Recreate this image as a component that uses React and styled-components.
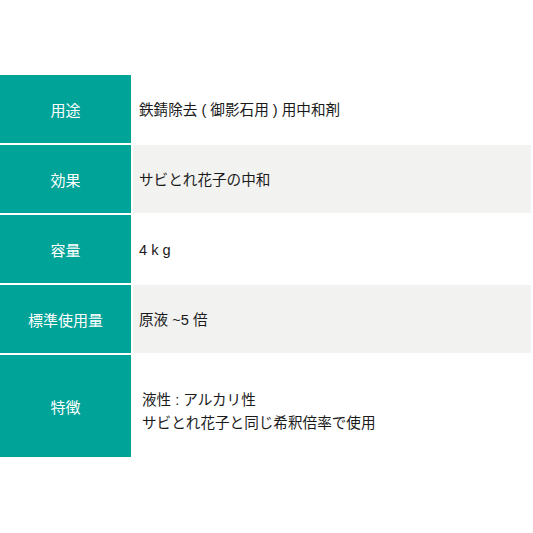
import React from 'react';
import styled, { createGlobalStyle } from 'styled-components';

const GlobalStyle = createGlobalStyle`
  html, body {
    margin: 0;
    padding: 0;
    background: #fff;
  }
  body {
    font-family: "Liberation Sans", "Noto Sans CJK JP", sans-serif;
    color: #1a1a1a;
  }
`;

const Page = styled.div`
  width: 533px;
  height: 533px;
  padding-top: 75px;
  box-sizing: border-box;
`;

const Table = styled.div`
  display: flex;
  flex-direction: column;
  gap: 2px;
  width: 531px;
`;

const Row = styled.div`
  display: grid;
  grid-template-columns: 131px 1fr;
  column-gap: 2px;
  height: ${(p) => p.$height || 68}px;
`;

const Label = styled.div`
  display: flex;
  align-items: center;
  justify-content: center;
  background: #00a398;
  color: #fff;
  font-size: 15px;
`;

const Value = styled.div`
  display: flex;
  flex-direction: column;
  justify-content: center;
  padding-left: ${(p) => (p.$indent ? 9 : 6)}px;
  padding-top: ${(p) => (p.$indent ? 12 : 2)}px;
  background: ${(p) => (p.$shaded ? '#f2f2f0' : '#fff')};
  font-size: 14.6px;
  line-height: 23px;
`;

const rows = [
  { label: '用途', lines: ['鉄錆除去 ( 御影石用 ) 用中和剤'] },
  { label: '効果', lines: ['サビとれ花子の中和'] },
  { label: '容量', lines: ['4 k g'] },
  { label: '標準使用量', lines: ['原液 ~5 倍'] },
  {
    label: '特徴',
    lines: ['液性 : アルカリ性', 'サビとれ花子と同じ希釈倍率で使用'],
    height: 102,
    indent: true,
  },
];

export default function App() {
  return (
    <Page>
      <GlobalStyle />
      <Table>
        {rows.map((r, i) => (
          <Row key={r.label} $height={r.height}>
            <Label>{r.label}</Label>
            <Value $shaded={i % 2 === 1} $indent={r.indent}>
              {r.lines.map((l) => (
                <span key={l}>{l}</span>
              ))}
            </Value>
          </Row>
        ))}
      </Table>
    </Page>
  );
}
